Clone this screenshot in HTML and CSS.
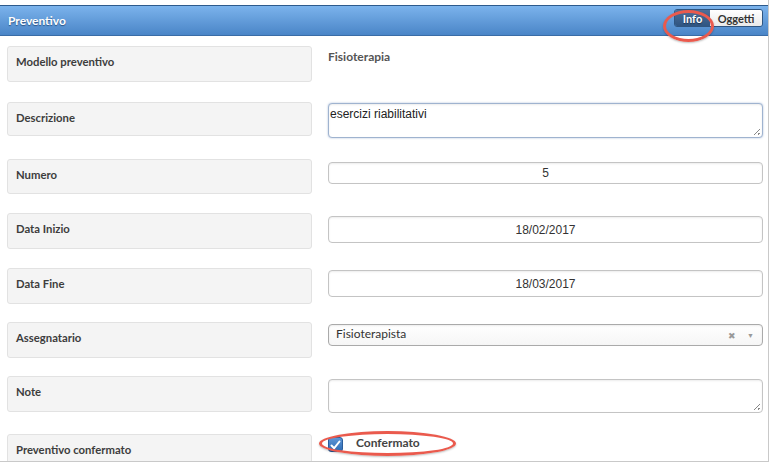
FILE: index.html
```html
<!DOCTYPE html>
<html lang="it">
<head>
<meta charset="utf-8">
<title>Preventivo</title>
<link rel="stylesheet" href="styles.css">
</head>
<body>
<div class="panel">
  <div class="header">
    <span class="title">Preventivo</span>
    <div class="tabs">
      <span class="tab active">Info</span>
      <span class="tab">Oggetti</span>
    </div>
  </div>
  <div class="body">
    <div class="row r1">
      <div class="label">Modello preventivo</div>
      <div class="value"><span class="static">Fisioterapia</span></div>
    </div>
    <div class="row r2">
      <div class="label">Descrizione</div>
      <div class="value"><div class="textarea focus">esercizi riabilitativi<span class="grip"></span></div></div>
    </div>
    <div class="row r3">
      <div class="label">Numero</div>
      <div class="value"><div class="input small">5</div></div>
    </div>
    <div class="row r4">
      <div class="label">Data Inizio</div>
      <div class="value"><div class="input">18/02/2017</div></div>
    </div>
    <div class="row r5">
      <div class="label">Data Fine</div>
      <div class="value"><div class="input">18/03/2017</div></div>
    </div>
    <div class="row r6">
      <div class="label">Assegnatario</div>
      <div class="value"><div class="select"><span class="sel-text">Fisioterapista</span><span class="sel-x">&#x2716;</span><span class="sel-arrow">&#x25BC;</span></div></div>
    </div>
    <div class="row r7">
      <div class="label">Note</div>
      <div class="value"><div class="textarea empty"><span class="grip"></span></div></div>
    </div>
    <div class="row r8">
      <div class="label">Preventivo confermato</div>
      <div class="value check-row">
        <span class="checkbox"><svg width="11" height="10" viewBox="0 0 11 10"><path d="M1.5 5.5 L4.2 8.2 L9.5 1.5" fill="none" stroke="#fff" stroke-width="2" stroke-linecap="round" stroke-linejoin="round"/></svg></span>
        <span class="check-label">Confermato</span>
      </div>
    </div>
  </div>
  <span class="ring ring-info"></span>
  <span class="ring ring-check"></span>
</div>
</body>
</html>
```

FILE: styles.css
```css
html, body {
  margin: 0;
  padding: 0;
  background: #fff;
}
body {
  font-family: Lato, "Open Sans", sans-serif;
  color: #444;
}
.panel {
  position: relative;
  width: 769px;
  height: 462px;
  padding-top: 5px;
  box-sizing: border-box;
  border-right: 1px solid #c9c9c9;
  border-bottom: 1px solid #c9c9c9;
  overflow: hidden;
}
.header {
  height: 31px;
  box-sizing: border-box;
  border-top: 1px solid #2d5a8c;
  border-bottom: 1px solid #3a6ca6;
  background: linear-gradient(#7bb3ec, #4a85c7);
  display: flex;
  align-items: center;
  justify-content: space-between;
  padding: 0 5px 0 8px;
}
.title {
  color: #fff;
  font-weight: bold;
  font-size: 12px;
  text-shadow: 0 1px 1px #2b5485;
}
.tabs {
  display: flex;
  height: 18px;
  margin-top: -5px;
  border-radius: 3px;
  overflow: hidden;
  border: 1px solid #2f5580;
  box-sizing: border-box;
}
.tab {
  display: flex;
  align-items: center;
  justify-content: center;
  font-size: 11px;
  font-weight: bold;
  color: #333;
  background: linear-gradient(#fff, #e9e9e9);
  width: 52px;
}
.tab.active {
  width: 35px;
  color: #fff;
  background: linear-gradient(#4d6f99, #2f5582);
  text-shadow: 0 1px 1px #1c3450;
}
.body {
  display: flex;
  flex-direction: column;
  padding: 10px 0 0 7px;
}
.row {
  display: flex;
  align-items: flex-start;
  height: 36px;
  margin-bottom: 19px;
}
.r1 { margin-bottom: 20px; }
.r2 { margin-bottom: 23px; height: 34px; }
.r3 { margin-bottom: 19px; height: 35px; }
.r5 { margin-bottom: 18px; }
.r6 { margin-bottom: 18px; }
.r7 { margin-bottom: 22px; }
.label {
  width: 305px;
  height: 100%;
  box-sizing: border-box;
  background: #f4f4f4;
  border: 1px solid #e2e2e2;
  border-radius: 3px;
  padding: 8px 0 0 8px;
  font-size: 11.3px;
  font-weight: bold;
  color: #3d3d3d;
  flex-shrink: 0;
}
.value {
  margin-left: 16px;
  width: 435px;
}
.static {
  display: block;
  padding-top: 3px;
  font-size: 12px;
  font-weight: bold;
  color: #555;
}
.textarea, .input, .select {
  box-sizing: border-box;
  border: 1px solid #c4c4c4;
  border-radius: 4px;
  box-shadow: inset 0 1px 2px rgba(0,0,0,0.08);
  background: #fff;
  position: relative;
}
.textarea {
  height: 35px;
  margin-top: 1px;
  font-family: "Liberation Sans", Arial, sans-serif;
  font-size: 12px;
  color: #222;
  padding: 3px 1px;
}
.textarea.focus {
  border-color: #9fb3cf;
  box-shadow: 0 0 2px rgba(82,120,180,0.5), inset 0 1px 2px rgba(0,0,0,0.08);
}
.textarea.empty {
  height: 34px;
  margin-top: 3px;
}
.grip {
  position: absolute;
  right: 2px;
  bottom: 2px;
  width: 6px;
  height: 6px;
  background: linear-gradient(135deg, transparent 45%, #888 45%, #888 55%, transparent 55%, transparent 75%, #888 75%, #888 85%, transparent 85%);
}
.input {
  height: 27px;
  margin-top: 3px;
  display: flex;
  align-items: center;
  justify-content: center;
  font-family: "Liberation Sans", Arial, sans-serif;
  font-size: 12px;
  color: #333;
}
.input.small {
  height: 22px;
}
.r5 .input { margin-top: 2px; }
.select {
  height: 22px;
  margin-top: 2px;
  display: flex;
  align-items: center;
  padding: 0 8px 0 7px;
  border-color: #aaa;
  background: linear-gradient(#fff, #f6f6f6);
  font-size: 12px;
  color: #333;
}
.sel-text { flex: 1; margin-top: -3px; }
.sel-x {
  font-size: 9px;
  color: #999;
  margin-right: 11px;
}
.sel-arrow {
  font-size: 7px;
  color: #999;
}
.check-row {
  display: flex;
  align-items: center;
  padding-top: 3px;
}
.checkbox {
  width: 15px;
  height: 15px;
  box-sizing: border-box;
  border-radius: 3px;
  background: linear-gradient(#5c95d6, #2f6bb4);
  border: 1px solid #2a5d9c;
  display: flex;
  align-items: center;
  justify-content: center;
}
.check-label {
  margin-left: 13px;
  font-size: 12px;
  font-weight: bold;
  color: #444;
  margin-top: -4px;
}
.ring {
  position: absolute;
  border: 3px solid #ea5a4d;
  border-radius: 50%;
  box-sizing: border-box;
  box-shadow: 0 1px 2px rgba(0,0,0,0.25);
}
.ring-info {
  left: 663px;
  top: 10px;
  width: 51px;
  height: 32px;
}
.ring-check {
  left: 319px;
  top: 431px;
  width: 137px;
  height: 25px;
}
```
